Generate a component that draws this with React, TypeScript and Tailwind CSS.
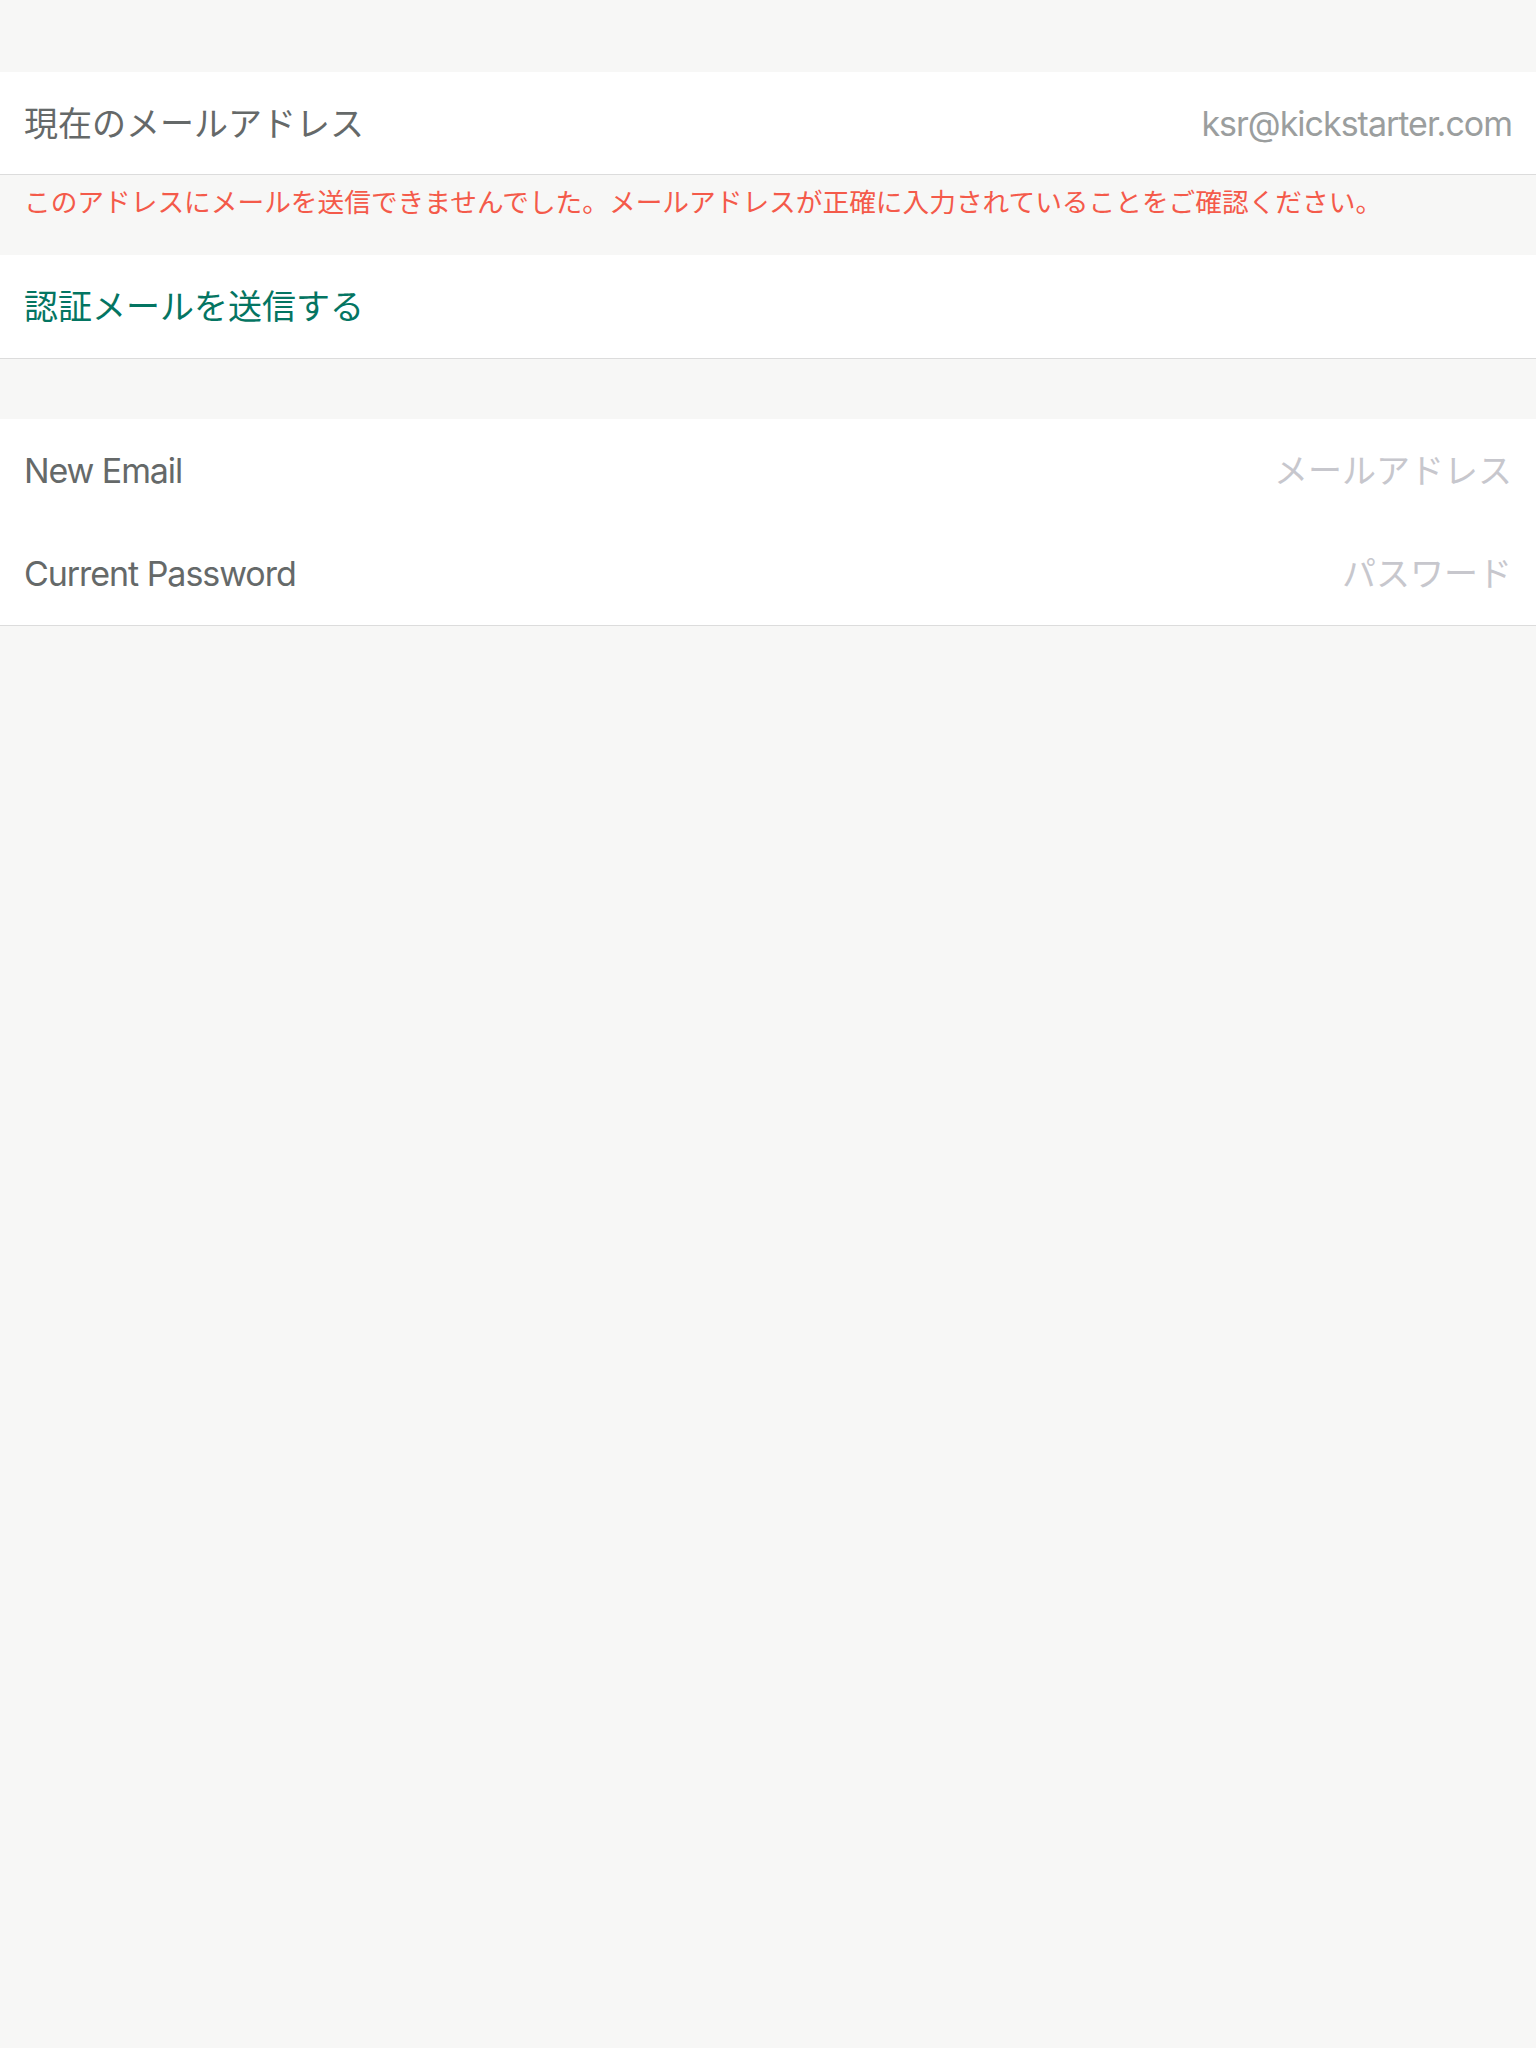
import React from 'react';

const font = { fontFamily: '"Inter", "Noto Sans CJK JP", sans-serif' };

const Row: React.FC<{ label: string; value: string; labelClass?: string; valueClass: string; border?: boolean }> = ({ label, value, labelClass, valueClass, border }) => (
  <div className={`flex items-center justify-between h-[103px] px-[24px] bg-white ${border ? 'border-b border-[#dcdcdc]' : ''}`}>
    <span className={`text-[34px] text-[#656969] ${labelClass ?? ''}`}>{label}</span>
    <span className={`text-[34px] ${valueClass}`}>{value}</span>
  </div>
);

const App: React.FC = () => {
  return (
    <div className="min-h-[2048px] w-full bg-[#f7f7f6]" style={font}>
      <div className="h-[72px]" />
      <Row label="現在のメールアドレス" value="ksr@kickstarter.com" valueClass="text-[#9b9e9e] tracking-[-1px]" border />
      <div className="h-[80px] px-[24px] pt-[11px]">
        <p className="text-[26.7px] leading-[32px] text-[#f45a4a]">
          このアドレスにメールを送信できませんでした。メールアドレスが正確に入力されていることをご確認ください。
        </p>
      </div>
      <div className="flex items-center h-[104px] px-[24px] bg-white border-b border-[#dcdcdc]">
        <span className="text-[34px] text-[#047562]">認証メールを送信する</span>
      </div>
      <div className="h-[60px]" />
      <div className="bg-white border-b border-[#dcdcdc]">
        <Row label="New Email" labelClass="tracking-[-1.1px]" value="メールアドレス" valueClass="text-[#c7c7cd]" />
        <Row label="Current Password" labelClass="tracking-[-1.05px]" value="パスワード" valueClass="text-[#c7c7cd]" />
      </div>
    </div>
  );
};

export default App;
